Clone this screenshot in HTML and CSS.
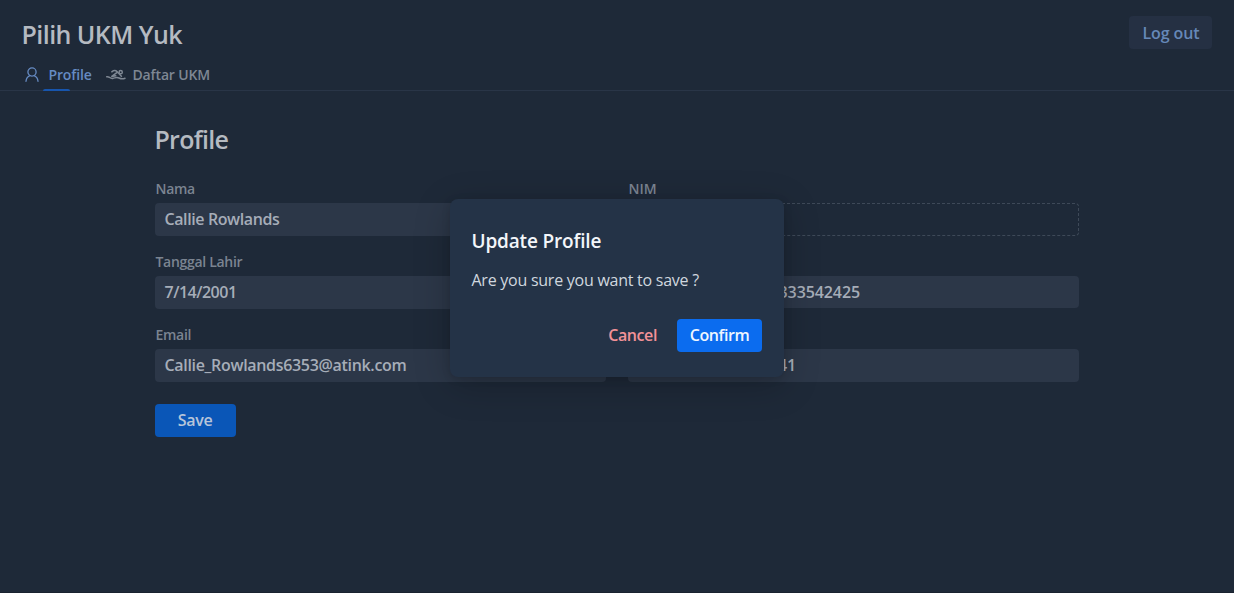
FILE: index.html
```
<!DOCTYPE html>
<html lang="id">
<head>
<meta charset="utf-8">
<title>Pilih UKM Yuk</title>
<link rel="stylesheet" href="styles.css">
</head>
<body>
<header class="header">
  <div class="topbar">
    <h1 class="brand">Pilih UKM Yuk</h1>
    <button class="logout">Log out</button>
  </div>
  <nav class="tabs">
    <a class="tab tab-active">
      <svg class="icon-user" viewBox="0 0 14 16" fill="none" stroke="currentColor" stroke-width="1.3" stroke-linecap="round"><circle cx="7" cy="5" r="4.1"/><path d="M1 14.3C1.3 11.4 3 9.4 5 8.7M13 14.3C12.7 11.4 11 9.4 9 8.7"/></svg>
      <span class="tab-text">Profile</span>
    </a>
    <a class="tab tab-second">
      <svg class="icon-swim" viewBox="0 0 20 12" fill="none" stroke="currentColor" stroke-width="1.5" stroke-linecap="round" stroke-linejoin="round"><path d="M.8 7.8C3 7 4 10 6.8 9.4S10.6 7.8 13 9s3.4 1.4 6 .2"/><path d="M5.8 2.8C7.6 1.4 9.6 1.2 11 2.6l4.4 4.6M10.8 3.6L5.8 7.4l4-.6"/><circle cx="14.7" cy="3.2" r="1.6"/></svg>
      <span class="tab-text">Daftar UKM</span>
    </a>
  </nav>
</header>
<main class="content">
  <h2 class="title">Profile</h2>
  <form class="form">
    <div class="field"><label class="label l-nama">Nama</label><div class="input"><span class="v-nama">Callie Rowlands</span></div></div>
    <div class="field"><label class="label l-nim">NIM</label><div class="input input-disabled"></div></div>
    <div class="field"><label class="label l-lahir">Tanggal Lahir</label><div class="input"><span class="v-date">7/14/2001</span></div></div>
    <div class="field field-raised"><label class="label"></label><div class="input"><span class="tail tail-phone">333542425</span></div></div>
    <div class="field"><label class="label l-email">Email</label><div class="input"><span class="v-email">Callie_Rowlands6353@atink.com</span></div></div>
    <div class="field"><label class="label"></label><div class="input"><span class="tail tail-id">41</span></div></div>
  </form>
  <button class="save" type="button">Save</button>
</main>
<div class="overlay">
  <section class="modal">
    <h3 class="modal-title">Update Profile</h3>
    <p class="modal-text">Are you sure you want to save ?</p>
    <div class="modal-actions">
      <button class="cancel">Cancel</button>
      <button class="confirm">Confirm</button>
    </div>
  </section>
</div>
</body>
</html>
```
FILE: styles.css
```
* { box-sizing: border-box; }
html, body { height: 100%; }
body { margin: 0; background: #1e2938; color: #b5bac1; font-family: "Open Sans", "Noto Sans", sans-serif; font-weight: 600; overflow: hidden; border-bottom: 1px solid #19222f; }
h1, h2, h3, p { margin: 0; white-space: nowrap; }
button { border: 0; padding: 0; font: inherit; white-space: nowrap; }
.header { height: 91px; border-bottom: 1px solid #293547; }
.topbar { display: flex; justify-content: space-between; align-items: flex-start; height: 60px; padding: 16px 22px 0 21.5px; }
.brand { font-size: 25px; line-height: 36px; font-weight: 650; letter-spacing: -.55px; }
.logout { width: 83px; height: 33px; border-radius: 4px; background: #253043; color: #6688b8; font-size: 16px; line-height: 33px; padding: 1px 0 0 1px; letter-spacing: -.1px; font-weight: 650; }
.tabs { display: flex; height: 31px; padding-left: 25px; }
.tab { display: flex; align-items: center; height: 29px; font-size: 14px; line-height: 20px; color: #7e8793; font-weight: 650; }
.tab-active { position: relative; width: 81px; color: #668bc3; }
.tab-active::after { content: ""; position: absolute; left: 18px; top: 29px; width: 27px; height: 2px; background: #1755ad; border-radius: 2px 2px 0 0; }
.tab-text { white-space: nowrap; letter-spacing: -.15px; }
.icon-user { width: 14px; height: 16px; margin-right: 9.5px; }
.icon-swim { width: 20px; height: 12px; margin-right: 6.5px; }
.content { width: 924px; margin-left: 154.5px; padding-top: 30px; }
.title { font-size: 25px; line-height: 36px; font-weight: 650; letter-spacing: -.75px; }
.form { display: grid; grid-template-columns: 451px 451px; column-gap: 22px; row-gap: 15.5px; margin-top: 21px; }
.field-raised { margin-top: -.5px; }
.label { display: block; height: 25px; padding-left: 1px; font-size: 14px; line-height: 21px; color: #7b8491; white-space: nowrap; letter-spacing: -.3px; }
.l-nim { letter-spacing: 0; }
.input { height: 32.5px; padding-left: 10px; border-radius: 4px; background: #2c3748; font-size: 16px; line-height: 33px; color: #a6adb8; white-space: nowrap; font-weight: 650; }
.input-disabled { background: none; border: 1px dashed #3e4958; }
.v-nama { letter-spacing: -.4px; }
.v-date { letter-spacing: -.5px; }
.v-email { letter-spacing: -.32px; }
.tail { display: block; text-align: right; letter-spacing: -.1px; }
.tail-phone { width: 222.5px; }
.tail-id { width: 158.5px; }
.save { display: block; width: 81px; height: 33px; margin-top: 22px; border-radius: 4px; background: #0a56b7; color: #b7c5da; font-size: 16px; line-height: 33px; letter-spacing: -.3px; font-weight: 650; }
.overlay { position: absolute; inset: 0; display: flex; justify-content: center; align-items: flex-start; padding-top: 199px; }
.modal { width: 334px; height: 178px; padding: 26px 22px 0 21.5px; border-radius: 8px; background: #243347; box-shadow: 0 8px 36px rgba(0, 0, 0, .22), 0 2px 8px rgba(0, 0, 0, .12); }
.modal-title { color: #f3f6fa; font-size: 19px; line-height: 32px; font-weight: 650; letter-spacing: -.17px; }
.modal-text { margin-top: 11px; color: #d0d7df; font-size: 16px; line-height: 24px; font-weight: 400; letter-spacing: -.25px; }
.modal-actions { display: flex; justify-content: flex-end; gap: 20px; margin-top: 27px; font-size: 16px; line-height: 33px; font-weight: 650; }
.cancel { height: 33px; background: none; color: #f29298; letter-spacing: -.4px; }
.confirm { width: 85px; height: 33px; border-radius: 4px; background: #0b6cef; color: #eff6ff; letter-spacing: -.4px; }
```
